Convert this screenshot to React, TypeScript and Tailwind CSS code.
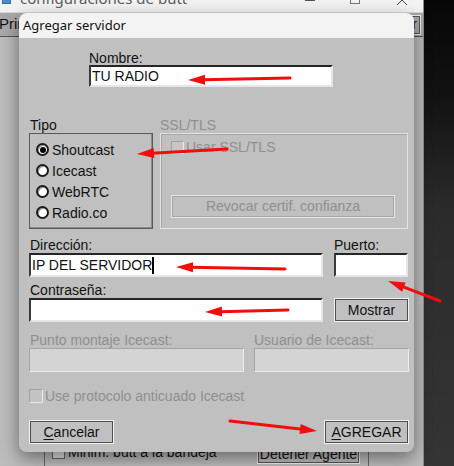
import React from 'react';

const sans = { fontFamily: '"Liberation Sans", Arial, sans-serif' };

interface ArrowProps {
  x1: number;
  y1: number;
  x2: number;
  y2: number;
}

// red annotation arrow, tail (x1,y1) -> tip (x2,y2)
const Arrow = ({ x1, y1, x2, y2 }: ArrowProps) => {
  const dx = x2 - x1;
  const dy = y2 - y1;
  const len = Math.sqrt(dx * dx + dy * dy);
  const ux = dx / len;
  const uy = dy / len;
  const bx = x2 - ux * 17;
  const by = y2 - uy * 17;
  const nx = -uy * 5;
  const ny = ux * 5;
  const pts = `${x2},${y2} ${bx + nx},${by + ny} ${bx - nx},${by - ny}`;
  return (
    <g>
      <line x1={x1} y1={y1} x2={bx + ux * 2} y2={by + uy * 2} stroke="#f20d0d" strokeWidth={3} strokeLinecap="round" />
      <polygon points={pts} fill="#f20d0d" />
    </g>
  );
};

const Radio = ({ label, checked }: { label: string; checked?: boolean }) => (
  <div className="flex items-center h-[21px] gap-[3px]">
    <div className="w-[13px] h-[13px] rounded-full bg-white border-2 border-[#1c1c1c] shadow-[inset_1px_1px_0_#9a9a9a] flex items-center justify-center">
      {checked && <div className="w-[6px] h-[6px] rounded-full bg-black" />}
    </div>
    <span className="text-[14px] leading-[16px] text-[#111]">{label}</span>
  </div>
);

const Input = ({ className, children }: { className: string; children?: React.ReactNode }) => (
  <div
    className={`bg-white border-2 border-t-[#262626] border-l-[#3a3a3a] border-b-[#e6e6e6] border-r-[#e6e6e6] flex items-center pl-[1px] text-[14px] text-[#111] ${className}`}
  >
    {children}
  </div>
);

const DisabledInput = ({ className }: { className: string }) => (
  <div className={`bg-[#d4d4d4] border border-t-[#a4a4a4] border-l-[#a4a4a4] border-b-[#ececec] border-r-[#ececec] ${className}`} />
);

const Button = ({ className, children }: { className: string; children: React.ReactNode }) => (
  <div
    className={`border border-[#f2f2f2] shadow-[inset_0_0_0_1px_#4d4d4d] bg-[#c0c0c0] flex items-center justify-center text-[14px] text-[#111] ${className}`}
  >
    {children}
  </div>
);

export default function App() {
  return (
    <div
      className="relative w-[454px] h-[466px] overflow-hidden bg-[linear-gradient(180deg,#070707_0%,#111_20%,#2b2b2b_45%,#343434_100%)]"
      style={sans}
    >
      {/* main window behind */}
      <div className="absolute left-0 top-0 w-[424px] h-[466px] flex flex-col bg-[#bcbcbc] border-r border-[#8c8c8c]">
        <div className="h-[12px] bg-[#f3f3f3] relative overflow-hidden flex items-end">
          <div className="absolute left-[2px] top-[-6px] w-[9px] h-[10px] bg-[#4a8fd0] border border-[#3b6e9e]" />
          <span
            className="absolute left-[20px] top-[-11px] text-[15px] leading-[18px] text-[#5b5b5b]"
            style={{ fontFamily: '"Noto Sans", sans-serif' }}
          >
            configuraciones de butt
          </span>
          <div className="absolute left-[305px] top-[0px] w-[10px] h-[1px] bg-[#555]" />
          <div className="absolute left-[350px] top-[-6px] w-[10px] h-[10px] border border-[#777]" />
          <svg className="absolute left-[396px] top-[-6px]" width="12" height="12" viewBox="0 0 12 12">
            <path d="M1 1 L11 11 M11 1 L1 11" stroke="#444" strokeWidth="1" />
          </svg>
        </div>
        <div className="h-[25px] bg-[#a9a9a9] border-t border-[#d8d8d8] border-b border-b-[#555] flex items-center justify-between">
          <span className="text-[15px] text-[#111] -ml-[1px]">Prin</span>
          <div className="h-[20px] mr-[2px] border border-[#eee] shadow-[inset_0_0_0_1px_#555] px-[3px] flex items-center text-[14px] text-[#111]">
            Conectar
          </div>
        </div>
        <div className="flex-1 flex flex-col justify-end">
          <div className="ml-[44px] w-[325px] h-[24px] border-l border-r border-[#6a6a6a] flex items-start pt-[2px]">
            <div className="ml-[7px] mt-[2px] w-[13px] h-[13px] bg-[#e0e0e0] border border-[#666]" />
            <span className="ml-[3px] text-[14px] text-[#111] leading-[16px]">Minim. butt a la bandeja</span>
            <div className="ml-auto mr-[8px] w-[103px] h-[20px] border border-[#eee] shadow-[inset_0_0_0_1px_#555] flex items-center justify-center text-[14px] text-[#111]">
              Detener Agente
            </div>
          </div>
        </div>
      </div>

      {/* dialog */}
      <div className="absolute left-[19px] top-[13px] w-[395px] h-[439px] rounded-[8px] overflow-hidden flex flex-col shadow-[0_6px_18px_rgba(0,0,0,0.45)]">
        <div className="h-[25px] bg-[#f3f3f3] flex items-center pl-[4px]">
          <span className="text-[13px] text-[#111]" style={{ fontFamily: '"Noto Sans", sans-serif' }}>
            Agregar servidor
          </span>
        </div>
        <div className="flex-1 bg-[#c0c0c0] pl-[10px] pr-[5px] flex flex-col">
          <div className="ml-[60px] mt-[13px] h-[14px] leading-[14px] text-[14px] text-[#111]">Nombre:</div>
          <Input className="ml-[60px] w-[244px] h-[22px]">TU RADIO</Input>

          <div className="mt-[31px] flex">
            <div className="flex flex-col w-[124px]">
              <div className="pl-[1px] h-[14px] leading-[14px] text-[14px] text-[#111]">Tipo</div>
              <div className="mt-[1px] h-[96px] border border-[#5a5a5a] shadow-[inset_-1px_-1px_0_#8a8a8a] pt-[5px] pl-[6px] flex flex-col">
                <Radio label="Shoutcast" checked />
                <Radio label="Icecast" />
                <Radio label="WebRTC" />
                <Radio label="Radio.co" />
              </div>
            </div>
            <div className="flex flex-col ml-[7px] w-[248px]">
              <div className="h-[14px] leading-[14px] text-[14px] text-[#8f8f8f]">SSL/TLS</div>
              <div className="mt-[1px] h-[96px] border border-[#e2e2e2] shadow-[inset_1px_1px_0_#a6a6a6] pt-[6px] pl-[10px] flex flex-col">
                <div className="flex items-center gap-[2px]">
                  <div className="w-[13px] h-[13px] bg-[#c6c6c6] border border-t-[#a0a0a0] border-l-[#a0a0a0] border-b-[#e8e8e8] border-r-[#e8e8e8]" />
                  <span className="text-[14px] leading-[14px] text-[#8f8f8f]">Usar SSL/TLS</span>
                </div>
                <div className="mt-[41px] w-[224px] h-[23px] border border-[#e6e6e6] shadow-[inset_0_0_0_1px_#a6a6a6] flex items-center justify-center text-[14px] text-[#8f8f8f]">
                  Revocar certif. confianza
                </div>
              </div>
            </div>
          </div>

          <div className="mt-[8px] flex">
            <div className="w-[305px] pl-[1px] h-[16px] leading-[16px] text-[14px] text-[#111]">Dirección:</div>
            <div className="h-[16px] leading-[16px] text-[14px] text-[#111]">Puerto:</div>
          </div>
          <div className="flex">
            <Input className="w-[294px] h-[24px]">
              <span>IP DEL SERVIDOR</span>
              <span className="w-[2px] h-[17px] bg-black" />
            </Input>
            <Input className="ml-[11px] w-[74px] h-[24px]" />
          </div>

          <div className="mt-[6px] pl-[1px] h-[15px] leading-[15px] text-[14px] text-[#111]">Contraseña:</div>
          <div className="flex">
            <Input className="w-[294px] h-[24px]" />
            <Button className="ml-[11px] w-[75px] h-[24px]">Mostrar</Button>
          </div>

          <div className="mt-[11px] flex text-[14px] text-[#8f8f8f] h-[15px] leading-[15px]">
            <div className="w-[225px] pl-[1px]">Punto montaje Icecast:</div>
            <div>Usuario de Icecast:</div>
          </div>
          <div className="flex">
            <DisabledInput className="w-[215px] h-[24px]" />
            <DisabledInput className="ml-[10px] w-[155px] h-[24px]" />
          </div>

          <div className="mt-[16px] flex items-center gap-[2px]">
            <div className="w-[14px] h-[14px] bg-[#c4c4c4] border border-t-[#a0a0a0] border-l-[#a0a0a0] border-b-[#e8e8e8] border-r-[#e8e8e8]" />
            <span className="text-[14px] leading-[16px] text-[#8f8f8f]">Use protocolo anticuado Icecast</span>
          </div>

          <div className="mt-[16px] flex justify-between">
            <Button className="w-[85px] h-[24px]">
              <span className="underline underline-offset-2">C</span>ancelar
            </Button>
            <Button className="w-[85px] h-[24px]">
              <span className="underline underline-offset-2">A</span>GREGAR
            </Button>
          </div>
        </div>
      </div>

      {/* red annotation arrows */}
      <svg className="absolute left-0 top-0 pointer-events-none" width="454" height="466" viewBox="0 0 454 466">
        <Arrow x1={290} y1={78} x2={188} y2={80} />
        <Arrow x1={227} y1={149} x2={137} y2={154} />
        <Arrow x1={285} y1={269} x2={176} y2={267} />
        <Arrow x1={440} y1={301} x2={388} y2={281} />
        <Arrow x1={288} y1={310} x2={205} y2={312} />
        <Arrow x1={230} y1={421} x2={317} y2={431} />
      </svg>
    </div>
  );
}
